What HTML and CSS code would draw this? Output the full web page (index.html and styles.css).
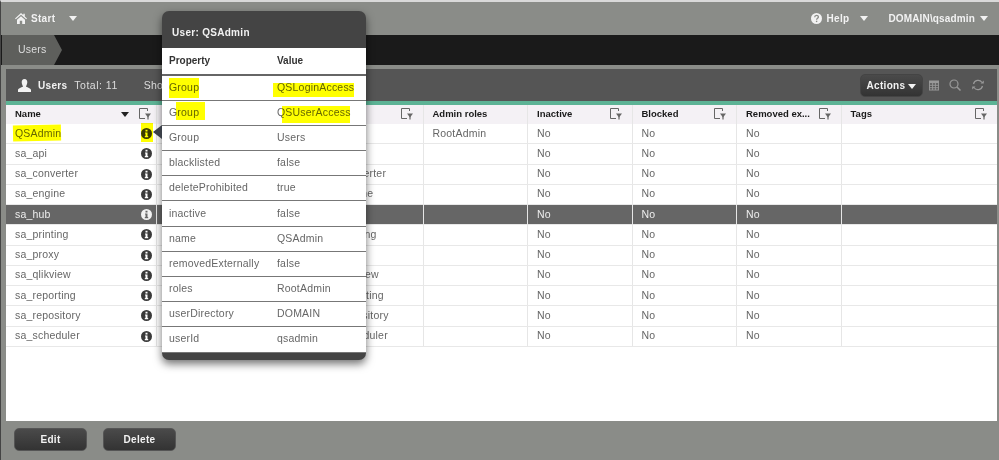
FILE: index.html
```html
<!DOCTYPE html>
<html lang="en">
<head>
    <meta charset="UTF-8">
    <meta name="viewport" content="width=device-width, initial-scale=1.0">
    <title>Users</title>
    <link rel="stylesheet" href="styles.css">
</head>
<body>
    <svg class="sprites" width="0" height="0">
        <symbol id="i-filter" viewBox="0 0 12 12">
            <path d="M8.500 3V.5H.5v10H6" fill="none" stroke="currentColor" stroke-width="1"/>
            <path d="M6 5.500h6L9 9.500z" fill="currentColor"/>
            <path d="M8.400 8h1.200v3.500H8.400z" fill="currentColor"/>
        </symbol>
        <symbol id="i-info" viewBox="0 0 11 11">
            <path fill-rule="evenodd" fill="currentColor" d="M5.500 0a5.500 5.500 0 1 0 0 11a5.500 5.500 0 0 0 0-11zM4.500 1.800h2v1.700h-2zM4 4.500h2.500v3.500h.7v1.200H3.800V8h.7V5.500H4z"/>
        </symbol>
    </svg>

    <header class="topnav">
        <svg class="home-icon" width="12" height="11" viewBox="0 0 12 11"><path fill="currentColor" d="M6 0L0 5.500l.8.8L6 1.700l5.200 4.600.8-.8L9.800 3.500V.8H8.300v1.300zM2 6.700L6 3.200l4 3.500V11H7.200V7.800H4.800V11H2z"/></svg>
        <span class="nav-label">Start</span>
        <span class="caret nav-caret"></span>
        <span class="nav-spacer"></span>
        <svg class="help-icon" width="11" height="11" viewBox="0 0 11 11"><circle cx="5.500" cy="5.500" r="5.500" fill="currentColor"/><path d="M3.700 4.200c0-2.300 3.700-2.300 3.700-.2 0 1.200-1.800 1.300-1.800 2.700" fill="none" stroke="#8a8c88" stroke-width="1.300"/><path d="M4.900 7.700h1.400v1.400H4.900z" fill="#8a8c88"/></svg>
        <span class="nav-label help-label">Help</span>
        <span class="caret help-caret"></span>
        <span class="nav-label user-label">DOMAIN\qsadmin</span>
        <span class="caret"></span>
    </header>

    <nav class="crumbs">
        <div class="crumb">Users</div>
    </nav>

    <main class="panel">
        <div class="panel-head">
            <svg class="user-icon" width="13" height="13" viewBox="0 0 13 13"><path fill="currentColor" d="M6.500 0C8.500 0 9.300 1.500 9.300 3.300S8.300 6.800 8 7.400c0 .7 5 1.400 5 3.600v2H0v-2c0-2.200 5-2.900 5-3.600C4.700 6.800 3.700 5.100 3.700 3.300S4.500 0 6.500 0z"/></svg>
            <strong class="panel-title">Users</strong>
            <span class="panel-total">Total: 11</span>
            <span class="panel-show">Sho</span>
            <span class="nav-spacer"></span>
            <button class="actions-btn">Actions <span class="caret"></span></button>
            <svg class="tool-icon" width="10" height="11" viewBox="0 0 11 11"><path fill="currentColor" d="M0 0h11v11H0zM1 3v1.700h2.500V3zM4.500 3v1.700H6.500V3zM7.500 3v1.700H10V3zM1 5.700v1.700h2.500V5.700zM4.500 5.700v1.700H6.500V5.700zM7.500 5.700v1.700H10V5.700zM1 8.400V10h2.500V8.400zM4.500 8.400V10H6.500V8.400zM7.500 8.400V10H10V8.400z" fill-rule="evenodd"/></svg>
            <svg class="tool-icon tool-search" width="12" height="12" viewBox="0 0 12 12"><circle cx="5" cy="5" r="4" fill="none" stroke="currentColor" stroke-width="1.200"/><path d="M8 8l3.500 3.500" stroke="currentColor" stroke-width="1.500"/></svg>
            <svg class="tool-icon tool-refresh" width="12" height="12" viewBox="0 0 12 12"><path d="M1.500 5A4.700 4.700 0 0 1 10 3.500M10.500 7A4.700 4.700 0 0 1 2 8.500" fill="none" stroke="currentColor" stroke-width="1.200"/><path d="M8.500 4.500h3.300V1.500zM3.500 7.500H.2v3z" fill="currentColor"/></svg>
        </div>

        <div class="grid">
            <div class="row head">
                <div class="cell c-name">Name<span class="caret sort-caret"></span><svg class="filter name-filter"><use href="#i-filter"/></svg></div>
                <div class="cell c-dir"></div>
                <div class="cell c-std"><svg class="filter"><use href="#i-filter"/></svg></div>
                <div class="cell c-std">Admin roles</div>
                <div class="cell c-std">Inactive<svg class="filter"><use href="#i-filter"/></svg></div>
                <div class="cell c-std">Blocked<svg class="filter"><use href="#i-filter"/></svg></div>
                <div class="cell c-std">Removed ex...<svg class="filter"><use href="#i-filter"/></svg></div>
                <div class="cell c-tags">Tags<svg class="filter"><use href="#i-filter"/></svg></div>
            </div>
            <div class="row">
                <div class="cell c-name">QSAdmin<svg class="info"><use href="#i-info"/></svg></div>
                <div class="cell c-dir"></div><div class="cell c-std"></div><div class="cell c-std">RootAdmin</div>
                <div class="cell c-std">No</div><div class="cell c-std">No</div><div class="cell c-std">No</div><div class="cell c-tags"></div>
            </div>
            <div class="row">
                <div class="cell c-name">sa_api<svg class="info"><use href="#i-info"/></svg></div>
                <div class="cell c-dir"></div><div class="cell c-std"></div><div class="cell c-std"></div>
                <div class="cell c-std">No</div><div class="cell c-std">No</div><div class="cell c-std">No</div><div class="cell c-tags"></div>
            </div>
            <div class="row">
                <div class="cell c-name">sa_converter<svg class="info"><use href="#i-info"/></svg></div>
                <div class="cell c-dir"></div><div class="cell c-std c-id">sa_converter</div><div class="cell c-std"></div>
                <div class="cell c-std">No</div><div class="cell c-std">No</div><div class="cell c-std">No</div><div class="cell c-tags"></div>
            </div>
            <div class="row">
                <div class="cell c-name">sa_engine<svg class="info"><use href="#i-info"/></svg></div>
                <div class="cell c-dir"></div><div class="cell c-std c-id">sa_engine</div><div class="cell c-std"></div>
                <div class="cell c-std">No</div><div class="cell c-std">No</div><div class="cell c-std">No</div><div class="cell c-tags"></div>
            </div>
            <div class="row selected">
                <div class="cell c-name">sa_hub<svg class="info"><use href="#i-info"/></svg></div>
                <div class="cell c-dir"></div><div class="cell c-std"></div><div class="cell c-std"></div>
                <div class="cell c-std">No</div><div class="cell c-std">No</div><div class="cell c-std">No</div><div class="cell c-tags"></div>
            </div>
            <div class="row">
                <div class="cell c-name">sa_printing<svg class="info"><use href="#i-info"/></svg></div>
                <div class="cell c-dir"></div><div class="cell c-std c-id">sa_printing</div><div class="cell c-std"></div>
                <div class="cell c-std">No</div><div class="cell c-std">No</div><div class="cell c-std">No</div><div class="cell c-tags"></div>
            </div>
            <div class="row">
                <div class="cell c-name">sa_proxy<svg class="info"><use href="#i-info"/></svg></div>
                <div class="cell c-dir"></div><div class="cell c-std"></div><div class="cell c-std"></div>
                <div class="cell c-std">No</div><div class="cell c-std">No</div><div class="cell c-std">No</div><div class="cell c-tags"></div>
            </div>
            <div class="row">
                <div class="cell c-name">sa_qlikview<svg class="info"><use href="#i-info"/></svg></div>
                <div class="cell c-dir"></div><div class="cell c-std c-id">sa_qlikview</div><div class="cell c-std"></div>
                <div class="cell c-std">No</div><div class="cell c-std">No</div><div class="cell c-std">No</div><div class="cell c-tags"></div>
            </div>
            <div class="row">
                <div class="cell c-name">sa_reporting<svg class="info"><use href="#i-info"/></svg></div>
                <div class="cell c-dir"></div><div class="cell c-std c-id">sa_reporting</div><div class="cell c-std"></div>
                <div class="cell c-std">No</div><div class="cell c-std">No</div><div class="cell c-std">No</div><div class="cell c-tags"></div>
            </div>
            <div class="row">
                <div class="cell c-name">sa_repository<svg class="info"><use href="#i-info"/></svg></div>
                <div class="cell c-dir"></div><div class="cell c-std c-id">sa_repository</div><div class="cell c-std"></div>
                <div class="cell c-std">No</div><div class="cell c-std">No</div><div class="cell c-std">No</div><div class="cell c-tags"></div>
            </div>
            <div class="row">
                <div class="cell c-name">sa_scheduler<svg class="info"><use href="#i-info"/></svg></div>
                <div class="cell c-dir"></div><div class="cell c-std c-id">sa_scheduler</div><div class="cell c-std"></div>
                <div class="cell c-std">No</div><div class="cell c-std">No</div><div class="cell c-std">No</div><div class="cell c-tags"></div>
            </div>
        </div>

        <footer class="panel-foot">
            <button class="foot-btn">Edit</button>
            <button class="foot-btn">Delete</button>
        </footer>
    </main>

    <!-- Popover over the table -->
    <aside class="popover">
        <span class="pop-arrow"></span>
        <h3 class="pop-title">User: QSAdmin</h3>
        <table class="pop-table">
            <thead>
                <tr><th>Property</th><th>Value</th></tr>
            </thead>
            <tbody>
                <tr><td>Group</td><td>QSLoginAccess</td></tr>
                <tr><td>Group</td><td>QSUserAccess</td></tr>
                <tr><td>Group</td><td>Users</td></tr>
                <tr><td>blacklisted</td><td>false</td></tr>
                <tr><td>deleteProhibited</td><td>true</td></tr>
                <tr><td>inactive</td><td>false</td></tr>
                <tr><td>name</td><td>QSAdmin</td></tr>
                <tr><td>removedExternally</td><td>false</td></tr>
                <tr><td>roles</td><td>RootAdmin</td></tr>
                <tr><td>userDirectory</td><td>DOMAIN</td></tr>
                <tr><td>userId</td><td>qsadmin</td></tr>
            </tbody>
        </table>
    </aside>

    <!-- Marker strokes drawn on top of the screenshot -->
    <span class="marker m-name"></span>
    <span class="marker m-info"></span>
    <span class="marker m-group1"></span>
    <span class="marker m-login"></span>
    <span class="marker m-group2"></span>
    <span class="marker m-user"></span>
</body>
</html>
```

FILE: styles.css
```css
* { box-sizing: border-box; }
html, body { height: 100%; }
body {
    margin: 0;
    height: 460px;
    overflow: hidden;
    position: relative;
    display: flex;
    flex-direction: column;
    font-family: "Liberation Sans", sans-serif;
    font-size: 10.500px;
    letter-spacing: .2px;
    color: #666;
    background-color: #8a8c88;
    border-top: 2px solid #d9d9d9;
    border-left: 1px solid #444;
}
.sprites { position: absolute; }
.caret {
    display: inline-block;
    width: 0;
    height: 0;
    border-left: 4px solid transparent;
    border-right: 4px solid transparent;
    border-top: 5px solid currentColor;
}
.nav-spacer { flex: 1; }

/* Top bar */
.topnav {
    height: 32px;
    flex: none;
    display: flex;
    align-items: center;
    padding: 0 11px 0 14px;
    color: #f2f2f2;
    font-size: 10px;
    font-weight: bold;
    letter-spacing: .3px;
}
.nav-label { margin-left: 4px; }
.nav-caret { margin-left: 14px; }
.help-label { margin-left: 5px; }
.help-caret { margin-left: 11px; margin-right: 20px; }
.user-label { margin-right: 5px; margin-left: 0; letter-spacing: .15px; }

/* Breadcrumb */
.crumbs {
    height: 30px;
    flex: none;
    margin-top: 1px;
    background-color: #1a1a1a;
    display: flex;
}
.crumb {
    width: 60px;
    margin-left: 1px;
    padding: 8px 0 0 16px;
    color: #ddd;
    background-color: #5e5f5c;
    clip-path: polygon(0 0, 52px 0, 60px 50%, 52px 100%, 0 100%);
}

/* Panel */
.panel {
    flex: 1;
    margin: 4px 2px 0 5px;
    display: flex;
    flex-direction: column;
    background-color: #fff;
    min-height: 0;
}
.panel-head {
    height: 32px;
    flex: none;
    display: flex;
    align-items: center;
    padding: 0 13px 0 12px;
    background-color: #555;
    color: #ddd;
}
.user-icon { color: #f2f2f2; }
.panel-title {
    margin-left: 7px;
    color: #f2f2f2;
    font-size: 10px;
    letter-spacing: .3px;
}
.panel-total { margin-left: 7px; letter-spacing: .5px; }
.panel-show { margin-left: 26px; }
.actions-btn {
    width: 63px;
    height: 23px;
    padding: 0;
    font: bold 10px "Liberation Sans", sans-serif;
    letter-spacing: .3px;
    color: #f2f2f2;
    background: linear-gradient(#4a4a4a, #333);
    border: 1px solid #444;
    border-radius: 5px;
}
.tool-icon { margin-left: 6px; color: #999; }
.tool-search { margin-left: 10px; }
.tool-refresh { margin-left: 11px; }

/* Table */
.grid {
    flex: 1;
    border-top: 4px solid #5cb395;
    min-height: 0;
}
.row {
    display: flex;
    height: 20.250px;
    border-bottom: 1px solid #e8e8e8;
}
.row.head {
    height: 19px;
    border-bottom: 0;
    background-color: #f4f1f5;
    color: #1a1a1a;
    font-size: 9.500px;
    font-weight: bold;
    letter-spacing: 0;
}
.row.selected {
    background-color: #666;
    color: #eee;
}
.cell {
    position: relative;
    display: flex;
    align-items: center;
    padding-left: 9px;
    padding-bottom: 2px;
    border-right: 1px solid #e6e6e6;
    white-space: nowrap;
}
.c-name { width: 151px; }
.c-dir { width: 162px; }
.c-std { width: 104.500px; }
.c-id { padding-left: 4px; }
.c-tags { flex: 1; border-right: 0; }
.filter {
    position: absolute;
    right: 10px;
    top: 3px;
    width: 12px;
    height: 12px;
    color: #666;
}
.name-filter { right: 5px; }
.sort-caret {
    position: absolute;
    right: 27px;
    top: 7px;
    color: #222;
}
.info {
    position: absolute;
    right: 4px;
    top: 4px;
    width: 11px;
    height: 11px;
    color: #3a3a3a;
}
.selected .info { color: #f2f2f2; }

/* Footer */
.panel-foot {
    height: 39px;
    flex: none;
    margin-left: -5px;
    margin-right: -2px;
    padding: 7px 0 0 13px;
    display: flex;
    gap: 16px;
    background-color: #8a8c88;
}
.foot-btn {
    width: 73px;
    height: 23px;
    padding: 0;
    font: bold 10px "Liberation Sans", sans-serif;
    letter-spacing: .3px;
    color: #f2f2f2;
    background: linear-gradient(#4a4a4a, #333);
    border: 1px solid #555;
    border-radius: 5px;
}

/* Popover */
.popover {
    position: absolute;
    left: 161px;
    top: 9px;
    width: 204px;
    height: 349px;
    padding-bottom: 8px;
    background-color: #444;
    border-radius: 7px;
    box-shadow: 0 4px 8px rgba(0, 0, 0, 0.55);
}
.pop-arrow {
    position: absolute;
    left: -9px;
    top: 114px;
    border-top: 7px solid transparent;
    border-bottom: 7px solid transparent;
    border-right: 9px solid #3a3f48;
}
.pop-title {
    height: 37px;
    margin: 0;
    padding: 16px 0 0 10px;
    font-size: 10px;
    letter-spacing: .3px;
    color: #f2f2f2;
}
.pop-table {
    width: 100%;
    table-layout: fixed;
    border-collapse: collapse;
    background-color: #fff;
}
.pop-table th {
    height: 27px;
    padding: 0 0 2px 7px;
    text-align: left;
    font-size: 10px;
    letter-spacing: 0;
    color: #333;
    border-bottom: 2px solid #666;
}
.pop-table td {
    height: 25.200px;
    padding: 0 0 2px 7px;
    border-bottom: 1px solid #777;
}
.pop-table th:first-child, .pop-table td:first-child { width: 108px; }

/* Yellow marker */
.marker {
    position: absolute;
    background-color: #ffff00;
    mix-blend-mode: multiply;
}
.m-name { left: 12px; top: 123px; width: 48px; height: 16px; transform: rotate(-1deg); }
.m-info { left: 140px; top: 121px; width: 12px; height: 19px; }
.m-group1 { left: 168px; top: 76px; width: 30px; height: 20px; }
.m-login { left: 272px; top: 81px; width: 81px; height: 14px; }
.m-group2 { left: 175px; top: 100px; width: 29px; height: 18px; }
.m-user { left: 281px; top: 104px; width: 68px; height: 17px; }
```
